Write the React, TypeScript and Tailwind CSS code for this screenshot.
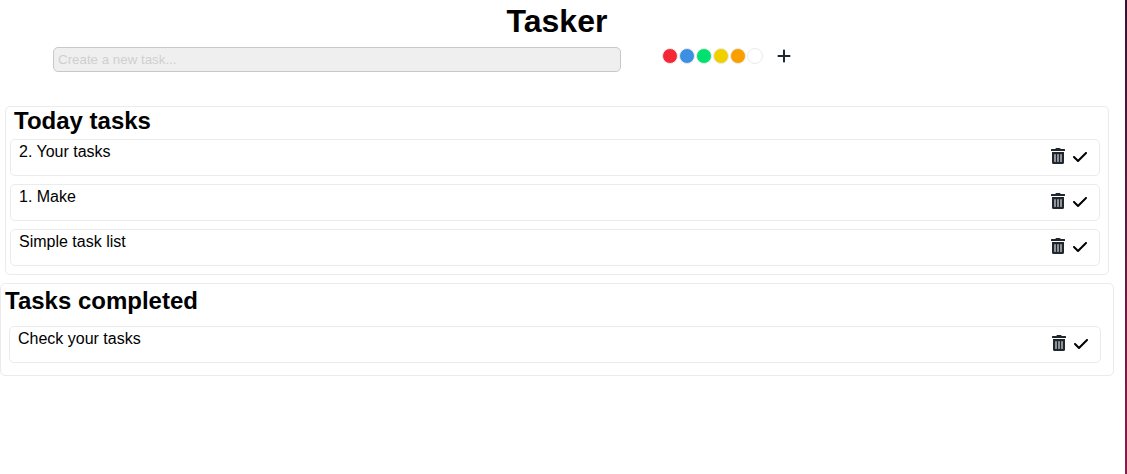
import { FaTrashAlt } from "react-icons/fa";
import { FaCheck, FaPlus } from "react-icons/fa6";

const swatches = [
  "bg-[#f32735]",
  "bg-[#3c8fe2]",
  "bg-[#00e170]",
  "bg-[#f1d000]",
  "bg-[#fa9f00]",
  "bg-white",
];

function Task({ text, done = false }: { text: string; done?: boolean }) {
  return (
    <li className="flex h-[37px] justify-between rounded-[5px] border border-[#ebebeb] pr-3 pl-2">
      <span className="pt-[3px] text-base leading-[18px]">{text}</span>
      <span className={done ? "flex pt-2" : "flex pt-2"}>
        <button aria-label="Delete task" className="h-4 w-3.5 text-[#20262e]">
          <FaTrashAlt className="h-4 w-3.5" />
        </button>
        <button aria-label="Complete task" className={done ? "ml-2 h-4 w-3.5 pt-px" : "ml-2 h-4 w-3.5 pt-px"}>
          <FaCheck className="h-4 w-3.5" />
        </button>
      </span>
    </li>
  );
}

export default function App() {
  return (
    <div className="flex h-[474px] w-[1127px] overflow-hidden bg-white font-['Liberation_Sans',Arial,sans-serif] text-black">
      <main className="w-[1114px]">
        <h1 className="pt-[3px] text-center text-[32px] leading-[36px] font-bold">Tasker</h1>
        <form className="mt-2 flex h-[25px] pl-[53px]">
          <input
            placeholder="Create a new task..."
            className="h-[25px] w-[568px] rounded-[5px] border border-[#c8c8c8] bg-[#efefef] px-1 text-[13.333px] placeholder:text-[#cfcfcf]"
          />
          <div className="ml-[41px] flex gap-px pt-px">
            {swatches.map((color) => (
              <button
                key={color}
                type="button"
                aria-label="Task color"
                className={`size-4 rounded-full border border-[#ebebeb] ${color}`}
              />
            ))}
          </div>
          <button type="button" aria-label="Add task" className="ml-3.5 h-4 w-3.5 pt-px text-[#20262e]">
            <FaPlus className="h-4 w-3.5" />
          </button>
        </form>
        <section className="mt-[34px] mr-[5px] ml-[5px] h-[169px] rounded-[5px] border border-[#ebebeb] pr-2 pl-1">
          <h2 className="pl-1 text-2xl leading-[28px] font-bold">Today tasks</h2>
          <ul className="mt-1 flex flex-col gap-2">
            <Task text="2. Your tasks" />
            <Task text="1. Make" />
            <Task text="Simple task list" />
          </ul>
        </section>
        <section className="mt-2 h-[93px] rounded-[5px] border border-[#ebebeb] pr-3 pl-1">
          <h2 className="pt-[3px] text-2xl leading-[28px] font-bold">Tasks completed</h2>
          <ul className="mt-[11px] ml-1">
            <Task text="Check your tasks" done />
          </ul>
        </section>
      </main>
      <div className="ml-auto w-0.5 bg-linear-to-b from-[#3a1034] to-[#8a1c4a]" />
    </div>
  );
}
